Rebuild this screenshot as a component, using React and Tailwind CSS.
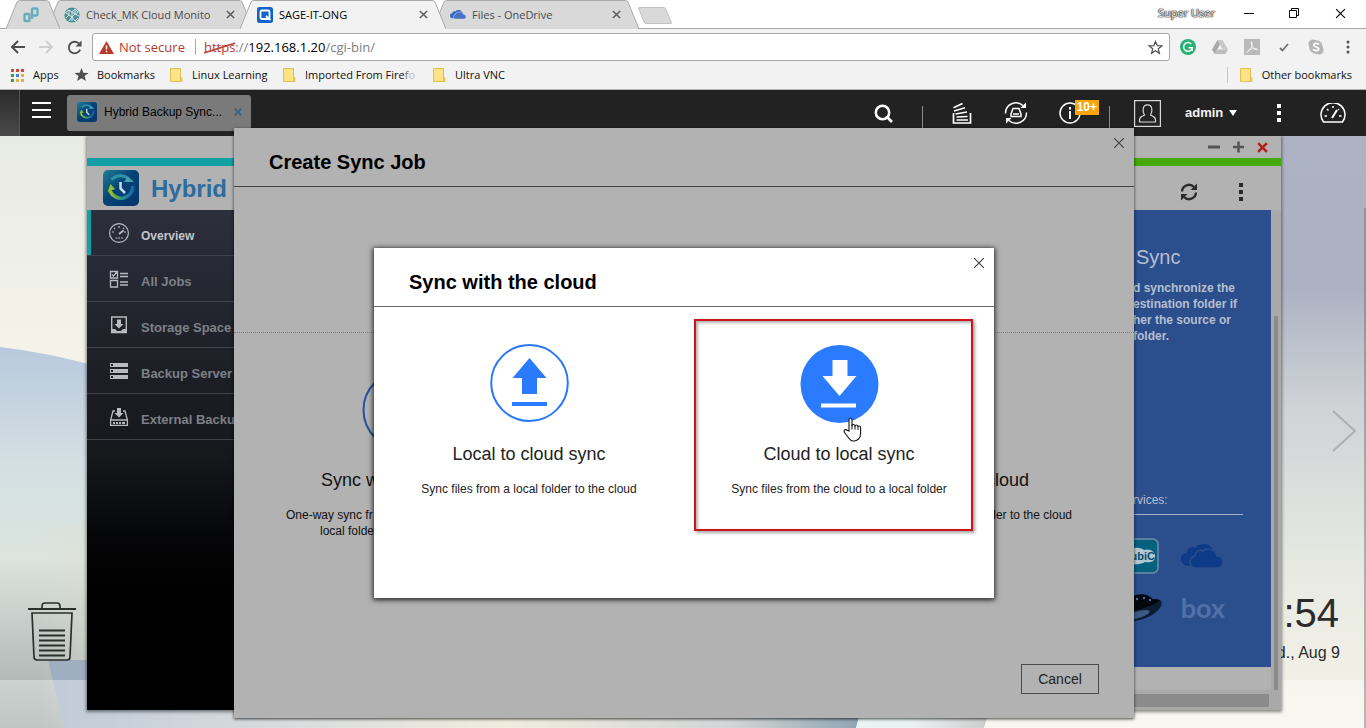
import React from "react";

const ui = "font-['Liberation_Sans',Arial,sans-serif]";
const chrome = "font-['Open_Sans','Noto_Sans',sans-serif]";

/* ---------- Browser tabs ---------- */

function TabShape({ width, fill }) {
  const d = `M0 29 L11 2 Q12 0.5 14 0.5 H${width - 14} Q${width - 12} 0.5 ${width - 11} 2 L${width} 29`;
  return (
    <svg className="absolute inset-0 h-full w-full" viewBox={`0 0 ${width} 29`} preserveAspectRatio="none" aria-hidden="true">
      <path d={d} fill={fill} stroke="#a9a9a9" />
    </svg>
  );
}

function CloseX({ size = 9, color = "#5a5a5a", stroke = 1.6 }) {
  return (
    <svg width={size} height={size} viewBox="0 0 10 10" stroke={color} strokeWidth={stroke} aria-hidden="true">
      <path d="M1 1L9 9M9 1L1 9" />
    </svg>
  );
}

function Tab({ icon, title, active, order }) {
  return (
    <div className={`relative -ml-[13px] h-[29px] w-[206px] ${order}`}>
      <TabShape width={206} fill={active ? "#f2f2f2" : "#d9d9d9"} />
      <div className="relative flex h-full items-center pr-[18px] pl-[17px]">
        {icon}
        <span className={`ml-[6px] flex-1 overflow-hidden text-[11px] leading-4 whitespace-nowrap ${active ? "text-black" : "text-[#4a4a4a]"}`}>{title}</span>
        <button aria-label={`Close ${title}`}><CloseX /></button>
      </div>
    </div>
  );
}

function CloudPair({ className, back, front, edge }) {
  return (
    <svg className={className} viewBox="0 0 42 24" aria-hidden="true">
      <path fill={back} d="M8 22 C3 22 0 19 0 15 C0 11 3 9 6 9 C6 5 10 2 14 4 C16 1 20 0 24 0 C28 0 31 3 32 7 L20 18 L12 22 Z" />
      <path fill={front} stroke={edge} strokeWidth="1.5" d="M15 24 C11 24 9 21 9 18 C9 15 11 13 14 12 C14 8 18 5 22 7 C25 4 34 4 36 12 C40 12 42 15 42 18 C42 22 39 24 36 24 Z" />
    </svg>
  );
}

function CheckMkIcon() {
  return (
    <svg width="16" height="16" viewBox="0 0 16 16" fill="none" aria-hidden="true">
      <circle cx="8" cy="8" r="7.6" fill="#4c8f98" />
      <path stroke="#d7e8ea" strokeWidth="1" d="M1 6L5 3L8 5L11 2L14 5M2 11L5 8L8 10L11 7L15 9M5 3V8M11 2V7M8 5V14M5 14L8 10L11 14L14 11M2 6L5 8M8 5L11 7L14 5" />
    </svg>
  );
}

function QIcon() {
  return (
    <svg width="16" height="16" viewBox="0 0 16 16" aria-hidden="true">
      <rect width="16" height="16" rx="2.5" fill="#1464c8" />
      <rect x="3.5" y="3.5" width="9" height="8.5" rx="1.5" fill="none" stroke="#fff" strokeWidth="1.8" />
      <path d="M9 9L13.5 13" stroke="#fff" strokeWidth="1.8" />
    </svg>
  );
}

function TabStrip() {
  return (
    <div className="relative flex h-[29px] border-b border-[#a9a9a9] bg-white">
      <div className="flex h-[29px] pl-[6px]">
        <div className="relative z-30 h-[29px] w-[54px]">
          <TabShape width={54} fill="#d9d9d9" />
          <button aria-label="Pinned tab" className="relative flex h-full w-full items-center justify-center pr-1">
            <svg width="16" height="16" viewBox="0 0 16 16" fill="none" stroke="#67aebd" strokeWidth="2.400" aria-hidden="true">
              <rect x="1.500" y="7" width="5" height="7" rx="1" />
              <path d="M9 12V3Q9 1.500 10.500 1.500H13Q14.500 1.500 14.500 2.500V7Q14.500 8.500 13 8.500H9" />
            </svg>
          </button>
        </div>
        <Tab order="z-20" title="Check_MK Cloud Monito" icon={<CheckMkIcon />} />
        <Tab order="z-40" active title="SAGE-IT-ONG" icon={<QIcon />} />
        <Tab order="z-10" title="Files - OneDrive" icon={<CloudPair className="h-[11px] w-4" back="#3566c0" front="#4472c8" edge="#d9d9d9" />} />
        <button aria-label="New tab" className="mt-[7px] ml-[2px] h-[17px] w-[28px] skew-x-[22deg] rounded-[2px] border border-[#c2c2c2] bg-[#d9d9d9]" />
      </div>
      <div className="ml-auto flex items-center pr-5 pb-[2px]">
        <span className="text-[11px] text-[#f2f2f2] [text-shadow:0_0_1px_#000,0_0_1px_#000,0_0_2px_#333]">Super User</span>
        <button aria-label="Minimize" className="ml-[29px]">
          <svg width="10" height="10" viewBox="0 0 10 10"><path d="M0 5.500H10" stroke="#000" /></svg>
        </button>
        <button aria-label="Restore" className="ml-[35px]">
          <svg width="10" height="10" viewBox="0 0 10 10" fill="none" stroke="#000"><path d="M.5 2.500H7.500V9.500H.5ZM2.500 2.500V.5H9.500V7.500H7.500" /></svg>
        </button>
        <button aria-label="Close window" className="ml-[36px]"><CloseX size={11} color="#000" stroke={1} /></button>
      </div>
    </div>
  );
}

/* ---------- Toolbar and bookmarks ---------- */

function Arrow({ color, flip }) {
  return (
    <svg width="15" height="14" viewBox="0 0 15 14" fill="none" stroke={color} strokeWidth="2" className={flip ? "-scale-x-100" : ""} aria-hidden="true">
      <path d="M15 7H2M8 1L2 7L8 13" />
    </svg>
  );
}

function Toolbar() {
  return (
    <div className="flex h-[33px] items-center bg-[#f2f2f2] pt-[3px] pr-[2px] pl-[10px]">
      <button aria-label="Back"><Arrow color="#4f4f4f" /></button>
      <button aria-label="Forward" className="ml-[14px]"><Arrow color="#cfcfcf" flip /></button>
      <button aria-label="Reload" className="ml-[13px]">
        <svg width="15" height="15" viewBox="0 0 16 16" fill="none" stroke="#4f4f4f" strokeWidth="2" aria-hidden="true">
          <path d="M14 10.200A6.200 6.200 0 1 1 12.500 3.600" />
          <path d="M15.500 .5V7H9Z" fill="#4f4f4f" stroke="none" />
        </svg>
      </button>
      <div className="mr-[2px] ml-[10px] flex h-[28px] flex-1 items-center rounded-[3px] border border-[#a6a6a6] bg-white px-[6px] text-[13px] leading-5">
        <svg width="15" height="13" viewBox="0 0 15 13" aria-hidden="true">
          <path d="M7.500 0L15 13H0Z" fill="#b93a2c" />
          <path d="M7.500 4.500V8.500M7.500 9.800V11.300" stroke="#fff" strokeWidth="1.500" />
        </svg>
        <span className="ml-[5px] text-[#b93a2c]">Not secure</span>
        <span className="ml-[10px] h-4 w-px bg-[#a6a6a6]" />
        <span className="ml-[8px] text-[#808080]">
          <span className="relative text-[#b93a2c]">https
            <svg className="absolute inset-x-0 top-[3px] h-[14px] w-full" viewBox="0 0 32 14" preserveAspectRatio="none" aria-hidden="true"><path d="M0 12L32 2" stroke="#c0473a" strokeWidth="1.800" /></svg>
          </span>://<span className="text-black">192.168.1.20</span>/cgi-bin/
        </span>
        <button aria-label="Bookmark this page" className="ml-auto">
          <svg width="15" height="15" viewBox="0 0 16 16" fill="none" stroke="#4f4f4f" strokeWidth="1.300" aria-hidden="true"><path d="M8 1.500L9.900 6L14.800 6.300L11 9.400L12.200 14.200L8 11.500L3.800 14.200L5 9.400L1.200 6.300L6.100 6Z" /></svg>
        </button>
      </div>
      <button aria-label="Grammarly" className="flex w-8 justify-center">
        <svg width="16" height="16" viewBox="0 0 16 16" fill="none"><circle cx="8" cy="8" r="8" fill="#25b375" /><path d="M11.200 4.900A4.400 4.400 0 1 0 12.300 9M8.500 8.800H12.300V12" stroke="#fff" strokeWidth="1.500" /></svg>
      </button>
      <button aria-label="Drive" className="flex w-8 justify-center">
        <svg width="16" height="14" viewBox="0 0 16 14"><path d="M5.500 0H10.500L16 9.500H10.700Z" fill="#c8c8c8" /><path d="M5.500 0L8 4.500L2.600 14L0 9.500Z" fill="#a9a9a9" /><path d="M5.300 9.500H16L13.400 14H2.600Z" fill="#bdbdbd" /></svg>
      </button>
      <button aria-label="PDF" className="flex w-8 justify-center">
        <svg width="16" height="16" viewBox="0 0 16 16" fill="none"><rect width="16" height="16" fill="#b9b9b9" /><path d="M2.500 13.500C6 12 8.500 7 8 3.500C8 2 6.800 2.500 7.200 4C8 7.500 10 11 13.500 11C14 9 7 9 3.500 12" stroke="#f4f4f4" /></svg>
      </button>
      <button aria-label="Check" className="flex w-8 justify-center">
        <svg width="10" height="9" viewBox="0 0 10 9" fill="none"><path d="M1 5L3.500 7.500L9 1" stroke="#707070" strokeWidth="1.800" /></svg>
      </button>
      <button aria-label="Skype" className="flex w-8 justify-center">
        <svg width="16" height="16" viewBox="0 0 16 16" fill="none"><circle cx="5" cy="5" r="4.600" fill="#b5b5b5" /><circle cx="11" cy="11" r="4.600" fill="#b5b5b5" /><circle cx="8" cy="8" r="6.800" fill="#b5b5b5" /><path d="M10.800 5.600C10 4 5.800 4 5.800 6.200C5.800 8.300 10.700 7.500 10.700 9.900C10.700 12 6 12.200 5.200 10.200" stroke="#fff" strokeWidth="1.800" /></svg>
      </button>
      <button aria-label="Browser menu" className="flex w-8 justify-center">
        <svg width="4" height="14" viewBox="0 0 4 14" fill="#555"><circle cx="2" cy="2" r="1.500" /><circle cx="2" cy="7" r="1.500" /><circle cx="2" cy="12" r="1.500" /></svg>
      </button>
    </div>
  );
}

function Folder() {
  return (
    <svg width="13" height="14" viewBox="0 0 13 14" aria-hidden="true">
      <path d="M.5 .5H10.500V9L12 10V13.500H.5Z" fill="#fce486" stroke="#e3bf52" />
      <path d="M10.500 13V9" stroke="#e3bf52" />
    </svg>
  );
}

function Bookmark({ icon, label, width }) {
  return (
    <a href="#" className={`flex items-center whitespace-nowrap ${width}`}>
      <span className="flex w-4 shrink-0">{icon}</span>
      <span className="ml-[6px]">{label}</span>
    </a>
  );
}

const appDots = ["#d2463c", "#d2463c", "#d2463c", "#3b9b5b", "#4a7fd0", "#e3b23c", "#3b9b5b", "#e3b23c", "#e3b23c"];

function Bookmarks() {
  return (
    <nav className="flex h-[28px] items-center border-b border-[#b3b3b3] bg-[#f2f2f2] pr-[14px] pb-[2px] pl-[10px] text-[11px] leading-4 text-[#111]">
      <Bookmark width="w-16 gap-px" label="Apps" icon={
        <svg width="14" height="14" viewBox="0 0 14 14">{appDots.map((c, i) => <rect key={i} x={1 + (i % 3) * 5} y={1 + Math.floor(i / 3) * 5} width="3" height="3" fill={c} />)}</svg>} />
      <Bookmark width="w-24 gap-px" label="Bookmarks" icon={
        <svg width="15" height="15" viewBox="0 0 16 16" fill="#4f4f4f"><path d="M8 1L10 6L15.500 6.300L11.200 9.700L12.700 15L8 12L3.300 15L4.800 9.700L.5 6.300L6 6Z" /></svg>} />
      <Bookmark width="w-[113px]" label="Linux Learning" icon={<Folder />} />
      <Bookmark width="w-[150px]" label={<>Imported From Fire<span className="text-[#777]">f</span><span className="text-[#bbb]">o</span></>} icon={<Folder />} />
      <Bookmark width="" label="Ultra VNC" icon={<Folder />} />
      <span className="mr-[12px] ml-auto h-4 w-px bg-[#c6c6c6]" />
      <Bookmark width="" label="Other bookmarks" icon={<Folder />} />
    </nav>
  );
}

/* ---------- NAS desktop bar ---------- */

function BackupLogo({ className }) {
  return (
    <svg className={className} viewBox="0 0 36 36" fill="none" aria-hidden="true">
      <defs>
        <linearGradient id="logoFill" x1="0" y1="0" x2="1" y2="1">
          <stop offset="0" stopColor="#237f98" /><stop offset=".45" stopColor="#044477" /><stop offset="1" stopColor="#07336a" />
        </linearGradient>
        <linearGradient id="ring" x1="0" y1="0" x2="1" y2="0">
          <stop offset="0" stopColor="#9bc51f" /><stop offset=".5" stopColor="#2f8f86" /><stop offset="1" stopColor="#1766ad" />
        </linearGradient>
      </defs>
      <rect width="36" height="36" rx="5" fill="url(#logoFill)" />
      <path d="M8.500 9.500A12.500 12.500 0 0 1 26 9" stroke="#2f93a8" strokeWidth="3" />
      <path d="M21 12H31Q27 8 24.500 7Z" fill="#45a3b0" />
      <path d="M30 16A12 12 0 0 1 7 21" stroke="url(#ring)" strokeWidth="3.500" />
      <path d="M4.500 22L7.500 14L12 19Z" fill="#8fc32e" />
      <path d="M17.500 12V18.500L22 23" stroke="#cfdbe5" strokeWidth="2.500" />
    </svg>
  );
}

function Dots({ color }) {
  return (
    <svg width="4" height="18" viewBox="0 0 4 18" fill={color} aria-hidden="true"><path d="M0 0H4V4H0ZM0 7H4V11H0ZM0 14H4V18H0Z" /></svg>
  );
}

const barBtn = "flex h-full items-center justify-center";

function NasBar() {
  return (
    <header className="flex h-[46px] bg-[#222]">
      <div className="w-5 border-r border-[#555] bg-linear-to-b from-[#2b2b2b] to-[#4a4a4a]" />
      <button aria-label="Main menu" className="ml-3 flex h-[41px] items-center">
        <svg width="19" height="17" viewBox="0 0 19 17" fill="#fff"><path d="M0 0H19V2H0ZM0 7H19V9H0ZM0 14H19V16H0Z" /></svg>
      </button>
      <div className="mt-[5px] ml-4 flex h-9 w-[184px] items-center rounded-[3px] bg-[#7a7a7a] pr-[9px] pb-[2px] pl-[10px] text-[12px] text-black">
        <BackupLogo className="h-5 w-5" />
        <span className="ml-[7px] flex-1 whitespace-nowrap">Hybrid Backup Sync...</span>
        <button aria-label="Close Hybrid Backup Sync"><CloseX size={8} color="#3d6384" stroke={2.5} /></button>
      </div>
      <div className="ml-auto flex">
        <button aria-label="Search" className={`${barBtn} w-[54px]`}>
          <svg width="19" height="19" viewBox="0 0 19 19" fill="none" stroke="#fff" strokeWidth="2.600"><circle cx="8.500" cy="8.500" r="6.700" /><path d="M13 13L18 18" /></svg>
        </button>
        <span className="mt-4 ml-3 w-px bg-[#8c8c8c]" />
        <button aria-label="Background tasks" className={`${barBtn} ml-3 w-[54px]`}>
          <svg width="20" height="22" viewBox="0 0 20 22" fill="none" stroke="#fff" strokeWidth="1.700"><path d="M1.500 11V21H18.500V11" /><path d="M4.500 18H16M4.500 15L15.500 14.500M3.500 12L15 10M2 9L13 5.800M1.500 5.800L10.500 1.500" /></svg>
        </button>
        <button aria-label="External devices" className={`${barBtn} w-[54px]`}>
          <svg width="24" height="24" viewBox="0 0 24 24" fill="none" stroke="#fff" strokeWidth="1.500">
            <path d="M1.500 12.500A10.500 10.500 0 0 1 19 4.500M22.500 11.500A10.500 10.500 0 0 1 5 19.500" />
            <path d="M22 1.500V7H16.500ZM2 22.500V17H7.500Z" fill="#fff" stroke="none" />
            <path d="M9 7.500H15L17 13V15.500H7V13ZM9 13H15" />
          </svg>
        </button>
        <button aria-label="Notifications, 10+" className={`${barBtn} relative w-[54px]`}>
          <svg width="22" height="22" viewBox="0 0 22 22" fill="none" stroke="#fff" strokeWidth="1.500"><circle cx="11" cy="11" r="10" /><path d="M11 5V7.500M11 9V17" strokeWidth="2" /></svg>
          <span className="absolute top-[10px] right-[-2px] bg-[#f7a60c] px-[2px] text-[12px] leading-[15px] font-bold text-white">10+</span>
        </button>
        <span className="mt-4 ml-3 w-px bg-[#8c8c8c]" />
        <button aria-label="User" className={`${barBtn} ml-[10px] w-[54px]`}>
          <svg width="27" height="27" viewBox="0 0 27 27" fill="none" stroke="#d8d8d8" strokeWidth="1.200">
            <rect x=".6" y=".6" width="25.800" height="25.800" />
            <path d="M10.500 15C8.500 12 8 4.800 13.500 4.800S18.500 12 16.500 15C18 16.500 21.500 16 21.500 20V22H5.500V20C5.500 16 9 16.500 10.500 15Z" />
          </svg>
        </button>
        <button className="flex h-full w-[84px] items-center pl-[11px] text-[13px] font-bold text-[#f2f2f2]">
          admin
          <svg className="ml-[6px]" width="8" height="6" viewBox="0 0 8 6" fill="#fff"><path d="M0 0H8L4 6Z" /></svg>
        </button>
        <button aria-label="More" className={`${barBtn} w-[42px]`}><Dots color="#fff" /></button>
        <button aria-label="Dashboard" className={`${barBtn} w-[66px]`}>
          <svg width="26" height="20" viewBox="0 0 26 20" fill="none" stroke="#fff" strokeWidth="1.500">
            <path d="M3.500 19A12 12 0 1 1 22.500 19Z" /><path d="M12 15L17 7" strokeWidth="2" /><path d="M13 3V5M4.500 13H7M19 13H21.500M7 6L8.500 7.500M19 6L18 7" />
          </svg>
        </button>
      </div>
    </header>
  );
}

/* ---------- Wallpaper ---------- */

function Wallpaper() {
  return (
    <svg className="absolute inset-0 h-full w-full" viewBox="0 0 1366 592" preserveAspectRatio="none" aria-hidden="true">
      <defs>
        <linearGradient id="sky" x1="0" y1="0" x2="0" y2="1"><stop offset="0" stopColor="#e8eae4" /><stop offset=".35" stopColor="#f3f3e9" /></linearGradient>
        <linearGradient id="hill" x1="0" y1="0" x2="0" y2="1">
          <stop offset="0" stopColor="#b9c9dd" /><stop offset=".3" stopColor="#d3dfe3" /><stop offset=".55" stopColor="#dbe4de" /><stop offset=".85" stopColor="#b5bebb" /><stop offset="1" stopColor="#9ca6a3" />
        </linearGradient>
        <linearGradient id="right" x1="0" y1="0" x2="0" y2="1">
          <stop offset="0" stopColor="#aeb3c3" /><stop offset=".25" stopColor="#abb1c2" /><stop offset=".46" stopColor="#cfd3d6" /><stop offset=".75" stopColor="#e9ebe3" /><stop offset="1" stopColor="#f4f2e8" />
        </linearGradient>
        <linearGradient id="glow" x1="0" y1="0" x2="1" y2="0"><stop offset="0" stopColor="#e4dfc9" stopOpacity="0" /><stop offset="1" stopColor="#e4dfc9" /></linearGradient>
        <linearGradient id="floor" x1="0" y1="0" x2="1" y2="0">
          <stop offset="0" stopColor="#a0afc2" /><stop offset=".2" stopColor="#b9c2ca" /><stop offset=".55" stopColor="#e9e3cc" /><stop offset=".83" stopColor="#b8bec0" /><stop offset="1" stopColor="#476b82" />
        </linearGradient>
        <linearGradient id="wedge" x1="0" y1="0" x2="1" y2="0"><stop offset="0" stopColor="#e0eff0" /><stop offset=".4" stopColor="#dcebeb" /><stop offset="1" stopColor="#aaa7a6" /></linearGradient>
      </defs>
      <rect width="1366" height="592" fill="url(#sky)" />
      <path d="M0 211Q45 216 100 231V592H0Z" fill="url(#hill)" />
      <rect x="40" y="390" width="60" height="202" fill="url(#glow)" opacity=".35" />
      <path d="M48 524H300V592H64Z" fill="#a0aec2" />
      <path d="M64 544H870L856 592H64Z" fill="url(#floor)" />
      <path d="M870 540H1000L984 592H856Z" fill="url(#wedge)" />
      <path d="M1000 0H1366V592H984L1000 540Z" fill="url(#right)" />
      <rect y="544" width="1366" height="48" fill="#fff" opacity=".36" />
      <rect x="1364" y="72" width="2" height="520" fill="#70747c" opacity=".5" />
    </svg>
  );
}

/* ---------- Hybrid Backup window ---------- */

const sideIcons = {
  overview: (
    <g fill="none" stroke="#b9bbc0" strokeWidth="1.200">
      <circle cx="10" cy="10" r="9.400" /><path d="M10 11L14.500 7.500" strokeWidth="1.800" /><path d="M10 3V5M5 5L6 6M15 5L14 6M3 9H5M15 9H17M6.500 15H8.500M9.300 15H11M12 15H14" />
    </g>
  ),
  jobs: (
    <g fill="none" stroke="#b9bbc0" strokeWidth="1.300">
      <path d="M1.500 2.500H8.500V9H1.500ZM1.500 11.500H8.500V18H1.500ZM3 5.500L4.500 7L8 3M11 4.500H19M11 7.500H19M11 13H19M11 16H19" />
    </g>
  ),
  storage: (
    <g><path d="M2.700 2H17.300V17.500H2.700Z" fill="none" stroke="#b9bbc0" strokeWidth="1.400" /><path d="M8 4.500H12V9H14.500L10 13.500L5.500 9H8Z" fill="#b9bbc0" /><path d="M2 14H6L8 16H12L14 14H18V18H2Z" fill="#b9bbc0" /></g>
  ),
  server: (
    <g fill="#b9bbc0"><path fillRule="evenodd" d="M1 2H19V6H1ZM2 3H4V5H2ZM1 8H19V12H1ZM2 9H4V11H2ZM1 14H19V18H1ZM2 15H4V17H2Z" /></g>
  ),
  external: (
    <g><path d="M6 4H4L1.600 13V18.400H18.400V13L16 4H14M1.600 13H18.400" fill="none" stroke="#b9bbc0" strokeWidth="1.300" /><path d="M8 1H12V6H14.500L10 10.500L5.500 6H8Z" fill="#b9bbc0" /><path d="M4 15H6V17H4ZM7 15H9V17H7ZM10 15H12V17H10ZM13 15H16V17H13Z" fill="#b9bbc0" /></g>
  ),
};

const sideItems = [
  ["overview", "Overview"],
  ["jobs", "All Jobs"],
  ["storage", "Storage Space"],
  ["server", "Backup Server"],
  ["external", "External Backup"],
];

function BackupWindow() {
  return (
    <section className="absolute top-0 right-[85px] bottom-[18px] left-[87px] flex flex-col bg-[#b2b2b2] shadow-[0_1px_3px_1px_rgba(0,0,0,0.45)]">
      <div className="flex h-[22px] items-center justify-end gap-[13px] pr-[13px]">
        <button aria-label="Minimize Hybrid Backup Sync"><svg width="12" height="12" viewBox="0 0 12 12"><path d="M0 6H12" stroke="#555" strokeWidth="3" /></svg></button>
        <button aria-label="Maximize Hybrid Backup Sync"><svg width="11" height="12" viewBox="0 0 11 12"><path d="M0 6H11M5.500 .5V11.500" stroke="#555" strokeWidth="2.600" /></svg></button>
        <button aria-label="Close window Hybrid Backup Sync"><CloseX size={11} color="#b3201d" stroke={2.4} /></button>
      </div>
      <div className="h-2 bg-linear-to-r from-[#12a0a6] from-10% to-[#44a806] to-85%" />
      <div className="flex h-11 items-center pr-[38px] pl-4">
        <BackupLogo className="h-9 w-9" />
        <h1 className="ml-3 pt-[2px] text-[24px] leading-8 font-bold text-[#2c6c9e]">Hybrid</h1>
        <button aria-label="Refresh" className="mt-[8px] ml-auto">
          <svg width="18" height="18" viewBox="0 0 18 18" fill="none" stroke="#2b2b2b" strokeWidth="2.400">
            <path d="M2 8.500A7 7 0 0 1 14 4M16 9.500A7 7 0 0 1 4 14" /><path d="M17 .5V7H10.500ZM1 17.500V11H7.500Z" fill="#2b2b2b" stroke="none" />
          </svg>
        </button>
        <button aria-label="Window options" className="mt-[8px] ml-[41px]"><Dots color="#2b2b2b" /></button>
      </div>
      <div className="flex min-h-0 flex-1">
        <nav className="w-[160px] shrink-0 bg-linear-to-b from-[#2c2f3c] via-[#16171b] via-50% to-black to-90%">
          {sideItems.map(([icon, label], i) => (
            <a key={icon} href="#" className="relative flex h-[46px] items-center border-b border-[#3e424a] pl-[22px] whitespace-nowrap font-bold">
              {i === 0 && <span className="absolute inset-y-0 left-0 w-1 bg-[#12a0a6]" />}
              <svg width="20" height="20" viewBox="0 0 20 20" aria-hidden="true">{sideIcons[icon]}</svg>
              <span className={`mt-[6px] ml-3 ${i === 0 ? "text-[12px] text-[#c4c5c9]" : "text-[13px] text-[#7d8086]"}`}>{label}</span>
            </a>
          ))}
        </nav>
        <div className="flex min-w-0 flex-1 flex-col">
          <div className="flex min-h-0 flex-1">
            <div className="flex flex-1 flex-col">
              <div className="flex flex-1 justify-end bg-[#2b4e8c] pr-[28px] text-[#b6bfd0]">
                <div className="w-[110px]">
                  <h2 className="mt-[35px] pl-[3px] text-[20px] leading-6">Sync</h2>
                  <p className="mt-[11px] text-[12px] leading-4 font-bold whitespace-nowrap">d synchronize the<br />estination folder if<br />her the source or<br />folder.</p>
                  <p className="mt-[148px] border-b border-[#a3b2c8] pb-[6px] text-[12px] leading-4">rvices:</p>
                  <div className="mt-[23px] flex items-center justify-between pr-[20px]">
                    <svg className="-ml-4" width="42" height="36" viewBox="0 0 42 36" aria-hidden="true">
                      <rect x="1" y="1" width="40" height="34" rx="5" fill="#06617f" stroke="#6d8fa8" strokeWidth="1.500" />
                      <path d="M3 20C3 13 9 12 13 12C18 8 25 10 27 12C33 10 39 14 38 19C38 24 32 25 28 24C22 28 3 27 3 20Z" fill="#b4c6cf" />
                      <text x="38" y="22" textAnchor="end" fontSize="11" fontWeight="bold" fontFamily="Liberation Sans" fill="#0b4a70">ubiC</text>
                    </svg>
                    <CloudPair className="h-6 w-[42px]" back="#0d3b87" front="#0d3b87" edge="#2b4e8c" />
                  </div>
                  <div className="mt-[19px] flex items-center justify-between pr-[18px]">
                    <svg className="-ml-4" width="46" height="30" viewBox="0 0 46 30" aria-hidden="true">
                      <path d="M9 12C12 -1 32 -2 37 8" fill="#02060d" />
                      <path d="M3 22C6 12 32 4 43 7C49 12 38 22 26 26C14 30 3 28 3 22Z" fill="#0b1c33" />
                      <path d="M3 20C6 10 32 4 43 7C36 14 16 18 3 20Z" fill="#02060d" />
                      <ellipse cx="20" cy="22" rx="13" ry="3.500" transform="rotate(-16 20 22)" fill="#3b5a84" />
                      <circle cx="20" cy="6" r="1.200" fill="#56709a" /><circle cx="27" cy="5" r="1.200" fill="#56709a" /><circle cx="33" cy="7" r="1.200" fill="#56709a" />
                    </svg>
                    <span className="font-['Lato',sans-serif] text-[27px] leading-[24px] font-bold text-[#5270a8]">box</span>
                  </div>
                </div>
              </div>
              <div className="h-[23px]" />
            </div>
            <div className="w-[10px] bg-[#a9a9a9] px-[3px] pt-[106px]"><div className="h-full bg-[#8b8b8b]" /></div>
          </div>
          <div className="h-5 bg-[#a9a9a9] pt-1 pr-3 pb-[3px]"><div className="h-full bg-[#8b8b8b]" /></div>
        </div>
      </div>
    </section>
  );
}

/* ---------- Dialogs ---------- */

function CreateJobDialog() {
  return (
    <section role="dialog" aria-label="Create Sync Job" className="absolute top-[38px] right-[232px] bottom-[10px] left-[234px] flex flex-col bg-[#b2b2b2] text-[#111] shadow-[0_1px_3px_rgba(0,0,0,0.75)]">
      <div className="flex h-[59px] items-start justify-between border-b border-[#444] pr-[9px] pl-[35px]">
        <h2 className="mt-[22px] text-[20px] leading-6 font-bold text-black">Create Sync Job</h2>
        <button aria-label="Close Create Sync Job" className="mt-[9px]"><CloseX size={12} color="#444" stroke={1} /></button>
      </div>
      <div className="h-[146px] border-b border-dotted border-[#7f7f7f]" />
      <div className="flex justify-between pr-[62px] pl-[52px]">
        <div className="w-[230px]">
          <svg className="mt-[37px] ml-[76px]" width="80" height="80" viewBox="0 0 80 80" fill="none" aria-hidden="true"><circle cx="40" cy="40" r="38.500" stroke="#2451a0" strokeWidth="2" /></svg>
          <h3 className="mt-[18px] pl-[35px] text-[18px] leading-6">Sync w</h3>
          <p className="mt-[15px] text-[12px] leading-4 whitespace-nowrap">One-way sync fr</p>
          <p className="pl-[34px] text-[12px] leading-4">local folde</p>
        </div>
        <div className="w-[130px] text-right">
          <h3 className="mt-[135px] pr-[43px] text-[18px] leading-6">cloud</h3>
          <p className="mt-[15px] text-[12px] leading-4">der to the cloud</p>
        </div>
      </div>
      <div className="mt-auto flex justify-end pr-[35px] pb-6">
        <button className="h-[30px] w-[78px] border border-[#4a4a4a] text-[14px] text-[#222]">Cancel</button>
      </div>
    </section>
  );
}

function SyncOption({ icon, title, text, children }) {
  return (
    <button className="relative flex-1 text-center text-[#222]">
      <span className="flex justify-center pt-[37px]">{icon}</span>
      <span className="mt-5 block text-[18px] leading-6">{title}</span>
      <span className="mt-[15px] block pb-[101px] text-[12px] leading-4">{text}</span>
      {children}
    </button>
  );
}

function CloudDialog() {
  return (
    <div className="absolute inset-x-0 top-[158px] flex justify-center pl-[2px]">
      <section role="dialog" aria-label="Sync with the cloud" className="w-[620px] max-w-full bg-white shadow-[0_1px_5px_1px_rgba(0,0,0,0.8)]">
        <div className="flex h-[59px] items-start justify-between border-b border-[#666] pr-[9px] pl-[35px]">
          <h2 className="mt-[22px] text-[20px] leading-6 font-bold text-black">Sync with the cloud</h2>
          <button aria-label="Close Sync with the cloud" className="mt-[9px]"><CloseX size={12} color="#444" stroke={1} /></button>
        </div>
        <div className="flex">
          <SyncOption title="Local to cloud sync" text="Sync files from a local folder to the cloud" icon={
            <svg width="80" height="78" viewBox="0 0 80 78" fill="none" aria-hidden="true">
              <ellipse cx="40.500" cy="39" rx="38.300" ry="38" stroke="#2a78fa" strokeWidth="2" />
              <path d="M40.500 14L57.500 34H48V50H33V34H23.500ZM23 58H58V62H23Z" fill="#2a7bff" />
            </svg>} />
          <SyncOption title="Cloud to local sync" text="Sync files from the cloud to a local folder" icon={
            <svg width="80" height="79" viewBox="0 0 80 79" className="-mb-px" fill="none" aria-hidden="true">
              <ellipse cx="40.500" cy="40" rx="39" ry="39" fill="#2a7bff" />
              <path d="M40.500 52L57.500 32H48.500V16H33.500V32H23.500ZM22 59.500H57V63.500H22Z" fill="#fff" />
            </svg>}>
            <span className="absolute top-3 right-[21px] left-[10px] h-[212px] border-2 border-[#cf1419] shadow-[2px_2px_3px_rgba(0,0,0,0.35),inset_2px_2px_3px_rgba(0,0,0,0.3)]" />
            <svg className="absolute top-[110px] left-[159px]" width="19" height="25" viewBox="0 0 19 25" aria-hidden="true">
              <path d="M6 14V3Q6 1 7.500 1T9 3V9Q9 7.500 10.500 7.500T12 9.500Q12 8 13.500 8T15 10Q15 9 16.300 9T17.600 11V17Q17.600 20 15.500 22Q13.500 24 11 24H10Q8 24 6.500 22L1.500 15.500Q.5 13.500 2 12.800Q3.500 12.300 4.500 13.500Z" fill="#fff" stroke="#111" strokeWidth="1.100" />
              <path d="M9 8V12.500M12 9V12.500M15 10V13" stroke="#111" />
            </svg>
          </SyncOption>
        </div>
      </section>
    </div>
  );
}

export default function App() {
  return (
    <div className={`flex min-h-screen flex-col overflow-hidden ${chrome}`}>
      <TabStrip />
      <Toolbar />
      <Bookmarks />
      <div className={`relative flex flex-1 flex-col ${ui}`}>
        <NasBar />
        <main className="relative flex-1 overflow-hidden">
          <Wallpaper />
          <button aria-label="Recycle Bin" className="absolute bottom-[66px] left-[28px]">
            <svg width="48" height="60" viewBox="0 0 48 60" fill="none" stroke="#2b2f2d" strokeWidth="1.700">
              <path d="M14 7V4Q14 1 17 1H29Q32 1 32 4V7" /><path d="M0 7H48" strokeWidth="2" />
              <path d="M4 11H44L42 55Q42 58 39 58H9Q6 58 6 55Z" />
              <path d="M11 28.500H37M11 33.500H37M11 38.500H37M11 43.500H37M11 48.500H37M11 53.500H37" strokeWidth="2" />
            </svg>
          </button>
          <div className="absolute right-[26px] bottom-[65px] text-right whitespace-nowrap text-[#2b2b2b]">
            <p className="pr-px text-[40px] leading-[44px]">:54</p>
            <p className="mt-[8px] text-[16px] leading-5">d., Aug 9</p>
          </div>
          <button aria-label="Next desktop" className="absolute top-[274px] right-[10px]">
            <svg width="24" height="42" viewBox="0 0 24 42" fill="none" stroke="#aeb0b0" strokeWidth="2"><path d="M1 1L23 21L1 41" /></svg>
          </button>
          <BackupWindow />
        </main>
        <CreateJobDialog />
        <CloudDialog />
      </div>
    </div>
  );
}
